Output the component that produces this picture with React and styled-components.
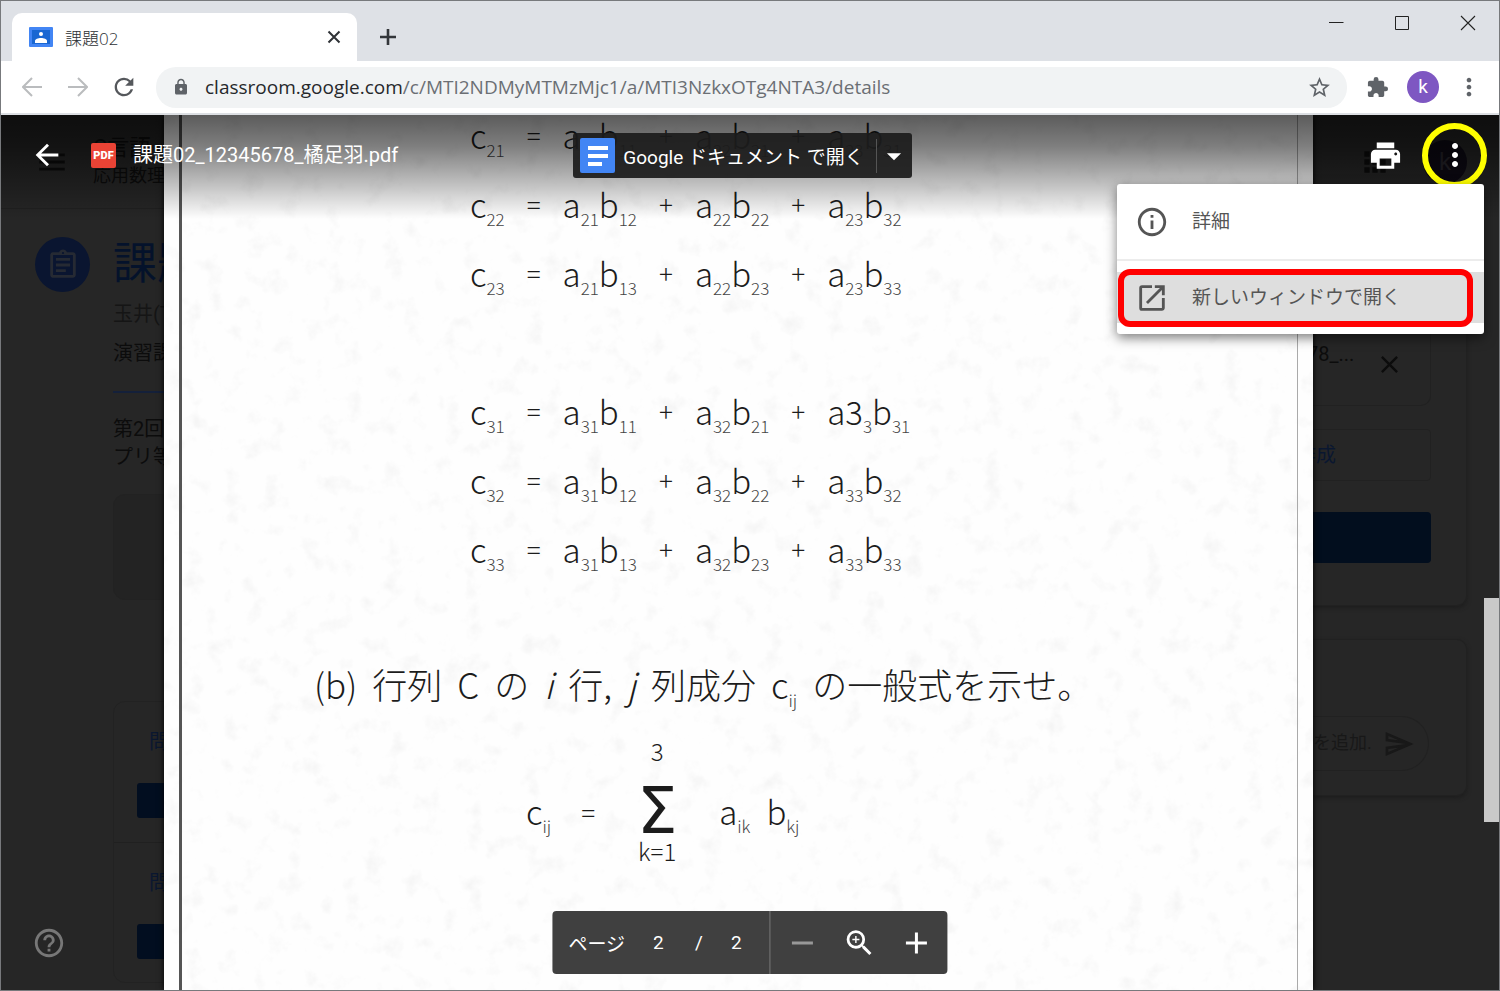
import React from "react";
import styled, { createGlobalStyle, css } from "styled-components";
import {
  MdArrowBack,
  MdPrint,
  MdMoreVert,
  MdInfoOutline,
  MdHelpOutline,
  MdOutlineAssignment,
  MdOutlineSend,
  MdExtension,
  MdLock,
  MdStarOutline,
  MdRefresh,
  MdClose,
  MdApps,
  MdMenu,
  MdZoomIn,
  MdAdd,
  MdRemove,
  MdArrowDropDown,
  MdOpenInNew,
} from "react-icons/md";

const equations = [
  { left: "21", terms: [["21", "11"], ["22", "21"], ["23", "31"]] },
  { left: "22", terms: [["21", "12"], ["22", "22"], ["23", "32"]] },
  { left: "23", terms: [["21", "13"], ["22", "23"], ["23", "33"]] },
  null,
  { left: "31", terms: [["31", "11"], ["32", "21"], ["3", "31", "3"]] },
  { left: "32", terms: [["31", "12"], ["32", "22"], ["33", "32"]] },
  { left: "33", terms: [["31", "13"], ["32", "23"], ["33", "33"]] },
];

function Browser() {
  return (
    <>
      <TabStrip>
        <Tab>
          <svg width="24" height="20" viewBox="0 0 24 20" aria-hidden="true">
            <rect width="24" height="20" rx="1" fill="#4285f4" />
            <rect x="3" y="3" width="18" height="14" fill="#1967d2" />
            <circle cx="12" cy="7" r="2" fill="#fff" />
            <path d="M6 16v-2c0-2 3-3 6-3s6 1 6 3v2z" fill="#fff" />
          </svg>
          <TabTitle>課題02</TabTitle>
          <IconButton aria-label="タブを閉じる" $size={24} $color="#2f3236">
            <svg width="14" height="14" viewBox="0 0 14 14">
              <path d="M1.500 1.500l11 11M12.500 1.500l-11 11" stroke="currentColor" strokeWidth="2" />
            </svg>
          </IconButton>
        </Tab>
        <IconButton aria-label="新しいタブ" $size={32} $color="#33363a">
          <svg width="18" height="18" viewBox="0 0 18 18">
            <path d="M9 1v16M1 9h16" stroke="currentColor" strokeWidth="2.6" />
          </svg>
        </IconButton>
        <WindowButtons>
          <IconButton aria-label="最小化" $size={44} $color="#222">
            <svg width="16" height="16" viewBox="0 0 16 16">
              <path d="M1 7.500h14.500" stroke="currentColor" />
            </svg>
          </IconButton>
          <IconButton aria-label="最大化" $size={44} $color="#222">
            <svg width="16" height="16" viewBox="0 0 16 16">
              <path d="M1.500 1.500h13v13h-13z" stroke="currentColor" fill="none" />
            </svg>
          </IconButton>
          <IconButton aria-label="閉じる" $size={44} $color="#222">
            <svg width="16" height="16" viewBox="0 0 16 16">
              <path d="M1 1l14 14M15 1L1 15" stroke="currentColor" strokeWidth="1.100" />
            </svg>
          </IconButton>
        </WindowButtons>
      </TabStrip>
      <Toolbar>
        <NavButtons>
          <IconButton aria-label="戻る" $size={30} $color="#babcbe">
            <NavArrow />
          </IconButton>
          <IconButton aria-label="進む" $size={30} $color="#babcbe">
            <NavArrow forward />
          </IconButton>
          <IconButton aria-label="再読み込み" $size={30} $color="#55585c">
            <MdRefresh size={28} />
          </IconButton>
        </NavButtons>
        <AddressBar>
          <MdLock size={18} color="#5f6368" />
          <Address href="#details">
            classroom.google.com
            <span>/c/MTI2NDMyMTMzMjc1/a/MTI3NzkxOTg4NTA3/details</span>
          </Address>
          <IconButton aria-label="ブックマーク" $size={26} $color="#5f6368">
            <MdStarOutline size={25} />
          </IconButton>
        </AddressBar>
        <IconButton aria-label="拡張機能" $size={30} $color="#5f6368">
          <MdExtension size={23} />
        </IconButton>
        <Avatar>k</Avatar>
        <IconButton aria-label="メニュー" $size={30} $color="#5f6368">
          <MdMoreVert size={28} />
        </IconButton>
      </Toolbar>
    </>
  );
}

function NavArrow({ forward }) {
  return (
    <svg width="20" height="20" viewBox="0 0 20 20">
      <path
        d={forward ? "M0 10h18M10 1l9 9-9 9" : "M20 10H2M10 1l-9 9 9 9"}
        fill="none"
        stroke="currentColor"
        strokeWidth="2"
      />
    </svg>
  );
}

function AssignmentPane() {
  return (
    <LeftPane>
      <ClassHeader>
        <MdMenu size={34} />
        <div>
          <ClassName>C言語</ClassName>
          <ClassSection>応用数理</ClassSection>
        </div>
      </ClassHeader>
      <Assignment>
        <AssignmentIcon>
          <MdOutlineAssignment size={34} />
        </AssignmentIcon>
        <AssignmentBody>
          <AssignmentTitle>課題</AssignmentTitle>
          <Teacher>玉井(T</Teacher>
          <Kind>演習課</Kind>
          <Details>
            第2回
            <br />
            プリ等
          </Details>
          <Thumbnail />
          <QuestionList>
            <Question>
              問
              <DimButton aria-label="問題を開く" />
            </Question>
            <Question>
              問
              <DimButton aria-label="問題を開く" />
            </Question>
          </QuestionList>
        </AssignmentBody>
      </Assignment>
    </LeftPane>
  );
}

function WorkPane() {
  return (
    <RightPane>
      <RightHeader>
        <MdApps size={32} />
        <DimAvatar>k</DimAvatar>
      </RightHeader>
      <WorkCard>
        <Attachment>
          <span>78_...</span>
          <MdClose size={29} />
        </Attachment>
        <CreateButton>作成</CreateButton>
        <SubmitButton aria-label="提出" />
      </WorkCard>
      <CommentCard>
        <CommentBox>
          <span>を追加.</span>
          <MdOutlineSend size={32} />
        </CommentBox>
      </CommentCard>
    </RightPane>
  );
}

function Equation({ left, terms }) {
  return (
    <EquationRow>
      <Symbol>
        c<Sub>{left}</Sub>
      </Symbol>
      <Operator>=</Operator>
      {terms.map(([a, b, raised], index) => (
        <React.Fragment key={index}>
          {index > 0 && <Operator>+</Operator>}
          <Symbol>
            a{raised}
            <Sub>{a}</Sub>b<Sub>{b}</Sub>
          </Symbol>
        </React.Fragment>
      ))}
    </EquationRow>
  );
}

function PaperGrain() {
  return (
    <Grain aria-hidden="true">
      <filter id="grain">
        <feTurbulence type="fractalNoise" baseFrequency="0.05" numOctaves="4" seed="4" />
        <feColorMatrix values="0 0 0 0 0.4  0 0 0 0 0.4  0 0 0 0 0.4  0.3 0 0 0 -0.165" />
      </filter>
      <rect width="100%" height="100%" filter="url(#grain)" />
    </Grain>
  );
}

function Document() {
  return (
    <Paper>
      <PaperGrain />
      <Equations>
        {equations.map((equation, index) =>
          equation ? <Equation key={index} {...equation} /> : <EquationRow key={index} />
        )}
      </Equations>
      <Problem>
        <span>(b)</span>
        <span>行列</span>
        <span>C</span>
        <span>の</span>
        <i>i</i>
        <span>行,</span>
        <i>j</i>
        <span>列成分</span>
        <span>
          c<Sub>ij</Sub>
        </span>
        <span>の一般式を示せ。</span>
      </Problem>
      <Formula>
        <Symbol>
          c<Sub>ij</Sub>
        </Symbol>
        <Operator>=</Operator>
        <Sum>
          <Limit>3</Limit>
          <Sigma>Σ</Sigma>
          <Limit>k=1</Limit>
        </Sum>
        <Product>
          <Symbol>
            a<Sub>ik</Sub>
          </Symbol>
          <Symbol>
            b<Sub>kj</Sub>
          </Symbol>
        </Product>
      </Formula>
    </Paper>
  );
}

function ViewerBar() {
  return (
    <TopBar>
      <FileInfo>
        <IconButton aria-label="閉じる" $size={34} $color="#fff">
          <MdArrowBack size={34} />
        </IconButton>
        <PdfBadge>PDF</PdfBadge>
        <FileName>課題02_12345678_橘足羽.pdf</FileName>
      </FileInfo>
      <OpenWith>
        <OpenButton>
          <svg width="35" height="35" viewBox="0 0 35 35" aria-hidden="true">
            <rect width="35" height="35" rx="2" fill="#4285f4" />
            <path d="M8 10h20M8 18h20M8 26h14" stroke="#fff" strokeWidth="4" />
          </svg>
          Google ドキュメント で開く
        </OpenButton>
        <OpenMore aria-label="他のアプリ">
          <MdArrowDropDown size={34} />
        </OpenMore>
      </OpenWith>
      <Actions>
        <IconButton aria-label="印刷" $size={36} $color="#fff">
          <MdPrint size={35} />
        </IconButton>
        <MoreButton aria-label="その他の操作">
          <MdMoreVert size={36} />
        </MoreButton>
      </Actions>
    </TopBar>
  );
}

function App() {
  return (
    <Window>
      <GlobalStyle />
      <Browser />
      <Viewer>
        <AssignmentPane />
        <Document />
        <WorkPane />
        <ViewerBar />
        <Menu>
          <MenuItem>
            <MdInfoOutline size={34} />
            <MenuLabel>詳細</MenuLabel>
          </MenuItem>
          <MenuDivider />
          <MenuItem $active>
            <MdOpenInNew size={34} />
            <MenuLabel>新しいウィンドウで開く</MenuLabel>
            <Highlight />
          </MenuItem>
        </Menu>
        <PageControls>
          <Pages>
            <label htmlFor="page">ページ</label>
            <PageInput id="page" defaultValue="2" />
            <span>/</span>
            <span>2</span>
          </Pages>
          <Zoom>
            <IconButton aria-label="縮小" $size={34} $color="#989898">
              <MdRemove size={36} />
            </IconButton>
            <IconButton aria-label="ズーム" $size={34} $color="#fff">
              <MdZoomIn size={34} />
            </IconButton>
            <IconButton aria-label="拡大" $size={34} $color="#fff">
              <MdAdd size={36} />
            </IconButton>
          </Zoom>
        </PageControls>
        <Help aria-label="ヘルプ">
          <MdHelpOutline size={34} />
        </Help>
        <ScrollThumb />
      </Viewer>
    </Window>
  );
}

export default App;

const GlobalStyle = createGlobalStyle`
  * {
    box-sizing: border-box;
  }
  body {
    margin: 0;
    font-family: Roboto, "Noto Sans CJK JP", sans-serif;
  }
  button {
    border: none;
    padding: 0;
    background: none;
    font: inherit;
    color: inherit;
    cursor: pointer;
  }
  svg {
    display: block;
    flex-shrink: 0;
  }
`;

const Window = styled.div`
  display: flex;
  flex-direction: column;
  min-height: 100vh;
  border: 1px solid #77797c;
  background: #262626;
`;

const IconButton = styled.button`
  display: flex;
  align-items: center;
  justify-content: center;
  flex-shrink: 0;
  width: ${({ $size }) => $size}px;
  height: ${({ $size }) => $size}px;
  color: ${({ $color }) => $color};
`;

const TabStrip = styled.div`
  display: flex;
  align-items: flex-end;
  gap: 15px;
  height: 60px;
  padding-left: 11px;
  background: #dee1e6;

  > button {
    margin-bottom: 8px;
  }
`;
const Tab = styled.div`
  display: flex;
  align-items: center;
  gap: 12px;
  width: 345px;
  height: 48px;
  padding: 0 11px 0 17px;
  border-radius: 10px 10px 0 0;
  background: #fff;
`;
const TabTitle = styled.span`
  flex: 1;
  font-family: "Open Sans", "Noto Sans CJK JP", sans-serif;
  font-size: 17px;
  font-weight: 300;
  color: #2c3033;
`;
const WindowButtons = styled.div`
  display: flex;
  align-self: flex-start;
  gap: 22px;
  margin-left: auto;
  padding-right: 9px;
`;

const Toolbar = styled.div`
  display: flex;
  align-items: center;
  height: 54px;
  padding: 0 15px 0 16px;
  gap: 15px;
  border-bottom: 2px solid #dcdfe3;
  background: #fff;
`;
const NavButtons = styled.div`
  display: flex;
  gap: 16px;
  padding-right: 2px;
`;
const AddressBar = styled.div`
  display: flex;
  align-items: center;
  flex: 1;
  gap: 15px;
  height: 41px;
  padding: 0 15px 0 16px;
  border-radius: 20px;
  background: #f1f3f4;
`;
const Address = styled.a`
  flex: 1;
  font-family: "Open Sans", sans-serif;
  font-size: 19px;
  color: #26282b;
  text-decoration: none;

  span {
    color: #6b6f74;
  }
`;
const Avatar = styled.div`
  width: 32px;
  height: 32px;
  border-radius: 50%;
  background: #7e57c2;
  color: #fff;
  font-size: 19px;
  line-height: 32px;
  text-align: center;
`;

const Viewer = styled.main`
  position: relative;
  display: flex;
  flex: 1;
  overflow: hidden;
`;

const LeftPane = styled.aside`
  flex: 0 0 163px;
  overflow: hidden;
  white-space: nowrap;
  color: #0c0c0c;
`;
const ClassHeader = styled.header`
  display: flex;
  align-items: center;
  gap: 24px;
  height: 94px;
  padding-left: 34px;
  border-bottom: 1px solid #202020;
`;
const ClassName = styled.div`
  font-size: 22px;
  line-height: 28px;
`;
const ClassSection = styled.div`
  font-size: 18px;
  line-height: 28px;
`;
const Assignment = styled.section`
  display: flex;
  gap: 23px;
  padding: 28px 0 0 34px;
`;
const AssignmentIcon = styled.div`
  display: flex;
  align-items: center;
  justify-content: center;
  flex: 0 0 55px;
  height: 55px;
  border-radius: 50%;
  background: #0a1530;
  color: #262a33;
`;
const AssignmentBody = styled.div`
  font-size: 20px;
  line-height: 28px;
`;
const AssignmentTitle = styled.h1`
  margin: 0;
  font-size: 44px;
  font-weight: 400;
  line-height: 55px;
  color: #04122b;
`;
const Teacher = styled.div`
  margin-top: 8px;
  color: #151515;
`;
const Kind = styled.div`
  margin-top: 11px;
  padding-bottom: 24px;
  border-bottom: 2px solid #14203a;
`;
const Details = styled.p`
  margin: 22px 0 23px;
`;
const Thumbnail = styled.div`
  width: 280px;
  height: 106px;
  border: 1px solid #222;
  border-radius: 12px;
  background: #232323;
`;
const QuestionList = styled.div`
  width: 280px;
  margin-top: 101px;
  border: 1px solid #222;
  border-radius: 12px;
`;
const Question = styled.div`
  height: 140px;
  padding: 26px 23px 0;
  text-indent: 12px;
  color: #0a1730;

  & + & {
    border-top: 1px solid #202020;
  }
`;
const DimButton = styled.button`
  display: block;
  width: 120px;
  height: 35px;
  margin-top: 27px;
  border-radius: 3px;
  background: #020e20;
`;

const RightPane = styled.aside`
  flex: 0 0 186px;
  overflow: hidden;
  padding-right: 32px;
  color: #0c0c0c;
  font-size: 20px;
`;
const RightHeader = styled.header`
  display: flex;
  align-items: center;
  justify-content: space-between;
  height: 94px;
  padding-left: 46px;
`;
const DimAvatar = styled.div`
  width: 44px;
  height: 44px;
  border-radius: 50%;
  background: #0d0a14;
  color: #26242b;
  font-size: 24px;
  line-height: 44px;
  text-align: center;
`;
/* the cards start underneath the paper */
const WorkCard = styled.section`
  height: 397px;
  margin-left: -18px;
  padding-right: 35px;
  border: 1px solid #212121;
  border-width: 0 1px 1px 0;
  border-radius: 0 0 10px 0;
  box-shadow: 0 2px 4px #1d1d1d;
`;
const Attachment = styled.div`
  display: flex;
  justify-content: space-between;
  height: 197px;
  padding: 133px 26px 0 12px;
  border: 1px solid #212121;
  border-width: 0 1px 1px 0;
  border-radius: 0 0 10px 0;

  svg {
    margin-top: 8px;
  }
`;
const CreateButton = styled.button`
  display: block;
  width: 100%;
  height: 52px;
  margin: 23px 0 31px;
  border: 1px solid #212121;
  border-radius: 0 4px 4px 0;
  text-align: left;
  line-height: 48px;
  color: #0a1730;
`;
const SubmitButton = styled.button`
  display: block;
  width: 100%;
  height: 51px;
  border-radius: 0 4px 4px 0;
  background: #020e1e;
`;
const CommentCard = styled.section`
  height: 157px;
  margin-top: 33px;
  padding: 76px 37px 0 0;
  border: 1px solid #212121;
  border-left: none;
  border-radius: 0 10px 10px 0;
  box-shadow: 0 2px 4px #1d1d1d;
`;
const CommentBox = styled.div`
  display: flex;
  align-items: center;
  justify-content: space-between;
  height: 55px;
  padding-right: 13px;
  border: 1px solid #212121;
  border-left: none;
  border-radius: 0 28px 28px 0;
  color: #181818;
  font-size: 18px;
  white-space: nowrap;

  span {
    padding-bottom: 6px;
  }
`;

const Paper = styled.article`
  position: relative;
  flex: 1;
  min-width: 0;
  overflow: hidden;
  isolation: isolate;
  padding: 0 14px;
  background: #fefefe;
  color: #1c1c1c;
  font-family: "Noto Sans CJK JP", sans-serif;
  font-weight: 300;
  box-shadow: 0 0 6px #000;

  &::after {
    content: "";
    position: absolute;
    inset: 0 15px;
    border-left: 3px solid #555;
    border-right: 1px solid #aaa;
  }
`;
const Grain = styled.svg`
  position: absolute;
  inset: 0;
  z-index: -1;
  width: 100%;
  height: 100%;
`;
const Equations = styled.div`
  margin: -15px 0 0 292px;
`;
const EquationRow = styled.div`
  display: flex;
  align-items: center;
  gap: 22px;
  height: 69px;
`;
const Symbol = styled.span`
  font-size: 33px;
  line-height: 46px;
  white-space: nowrap;
`;
const Sub = styled.sub`
  font-size: 17px;
  line-height: 17px;
  color: #444;
`;
const Operator = styled.span`
  font-size: 26px;
`;
const Problem = styled.p`
  display: flex;
  align-items: baseline;
  gap: 15px;
  margin: 75px 0 0 136px;
  font-size: 35px;
  line-height: 52px;
  white-space: nowrap;
`;
const Formula = styled.div`
  display: flex;
  align-items: center;
  gap: 30px;
  margin: 23px 0 0 348px;
`;
const Sum = styled.span`
  display: flex;
  flex-direction: column;
  align-items: center;
  min-width: 64px;
  padding-bottom: 20px;
`;
const Product = styled.span`
  display: flex;
  gap: 16px;
`;
const Limit = styled.span`
  font-size: 24px;
  line-height: 36px;
`;
const Sigma = styled.span`
  margin: 10px 0 -10px;
  font-family: "DejaVu Sans", sans-serif;
  font-size: 64px;
  font-weight: 400;
  line-height: 64px;
`;

const TopBar = styled.header`
  position: absolute;
  inset: 0 0 auto;
  display: grid;
  grid-template-columns: 1fr auto 1fr;
  align-items: start;
  height: 104px;
  padding: 18px 15px 0 0;
  background: linear-gradient(rgba(0, 0, 0, 0.64), rgba(0, 0, 0, 0.5) 30%, rgba(0, 0, 0, 0.22) 70%, transparent);
  color: #fff;
  font-size: 20px;
`;
const FileInfo = styled.div`
  display: flex;
  align-items: center;
  height: 44px;
  padding-left: 29px;
`;
const PdfBadge = styled.span`
  width: 25px;
  height: 25px;
  margin: 0 17px 0 27px;
  border-radius: 2px;
  background: #ea4335;
  font-size: 11px;
  font-weight: 900;
  line-height: 25px;
  text-align: center;
`;
const FileName = styled.span`
  line-height: 24px;
  white-space: nowrap;
`;
const OpenWith = styled.div`
  display: flex;
  align-items: center;
  height: 45px;
  border-radius: 3px;
  background: rgba(28, 28, 28, 0.93);
  font-size: 19px;
`;
const OpenButton = styled.button`
  display: flex;
  align-items: center;
  gap: 8px;
  padding: 0 12px 0 7px;
`;
const OpenMore = styled.button`
  display: flex;
  align-items: center;
  width: 36px;
  height: 34px;
  border-left: 1px solid #555;
`;
const Actions = styled.div`
  display: flex;
  align-items: center;
  justify-content: flex-end;
  gap: 19px;
  height: 44px;
  margin-right: -3px;
`;
const MoreButton = styled.button`
  display: flex;
  align-items: center;
  justify-content: center;
  width: 65px;
  height: 65px;
  border: 6px solid #ff0;
  border-radius: 50%;
`;

const Menu = styled.div`
  position: absolute;
  top: 69px;
  right: 15px;
  width: 367px;
  padding-bottom: 11px;
  border-radius: 3px;
  background: #fff;
  box-shadow: 0 4px 12px rgba(0, 0, 0, 0.5);
`;
const MenuItem = styled.button`
  position: relative;
  display: flex;
  align-items: center;
  gap: 23px;
  width: 100%;
  height: 75px;
  padding-left: 18px;
  font-size: 19px;
  color: #555;
  ${({ $active }) =>
    $active &&
    css`
      height: 51px;
      background: #dedede;
    `}
`;
const MenuLabel = styled.span`
  padding-bottom: 5px;
`;
const MenuDivider = styled.div`
  margin-bottom: 11px;
  border-top: 2px solid #ececec;
`;
const Highlight = styled.span`
  position: absolute;
  inset: -3px 11px -4px 1px;
  border: 6px solid #f00;
  border-radius: 12px;
`;

const PageControls = styled.div`
  position: absolute;
  bottom: 16px;
  left: 50%;
  display: flex;
  height: 63px;
  transform: translateX(-50%);
  border-radius: 4px;
  background: #404040;
  color: #fff;
  font-size: 19px;
`;
const Pages = styled.div`
  display: flex;
  align-items: center;
  gap: 28px;
  padding: 0 28px 0 16px;
  border-right: 1px solid #777;
`;
const PageInput = styled.input`
  width: 14px;
  padding: 0;
  border: none;
  background: none;
  color: inherit;
  font: inherit;
`;
const Zoom = styled.div`
  display: flex;
  align-items: center;
  gap: 23px;
  padding: 0 14px 0 15px;
`;
const Help = styled.button`
  position: absolute;
  bottom: 30px;
  left: 31px;
  color: #777;
`;
const ScrollThumb = styled.div`
  position: absolute;
  top: 483px;
  right: 0;
  width: 15px;
  height: 224px;
  background: #c9c9c9;
`;
